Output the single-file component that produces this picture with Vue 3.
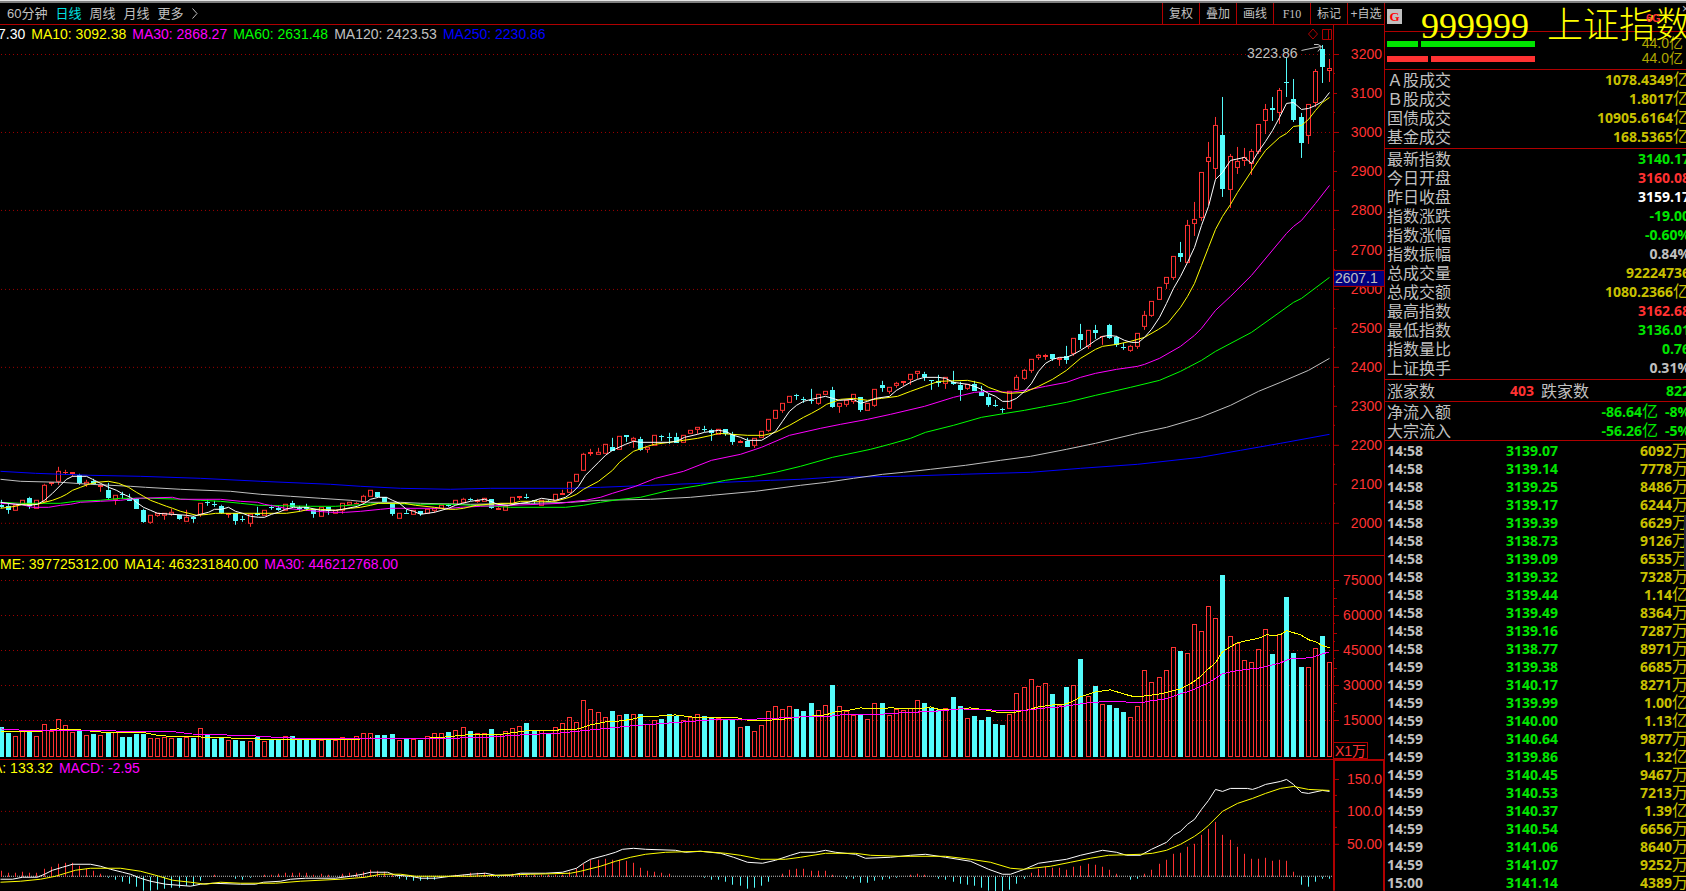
<script setup>
const periods = ['60分钟', '日线', '周线', '月线', '更多']
const tools = ['复权', '叠加', '画线', 'F10', '标记', '+自选']

const barX = (i) => 1 + Math.floor(7.1015 * i + 0.48)

// Each candle: colour, body top, body bottom, optional wick top and wick bottom.
const candleText = `
c505,507,500,508 c506,510,504,514 r505,511 r500,505 c498,506,497,509 r500,509 r485,502,484,503 r482,484,482,486 r471,482,467,485 r472,472,470,475
r472,474,472,477 c475,483,474,485 r482,485,480,487 c481,484,479,485 r485,487,484,492 c490,498,483,499 r495,500,495,505 c494,494,492,499 c498,501,494,501 c499,509
c510,522,509,523 r515,523,515,524 r513,516,513,517 r513,516,513,520 r512,515,509,516 c515,519,515,520 r517,522,510,522 c517,519,516,523 r503,515,503,517 c502,502,500,506
c504,504,501,507 c506,513,505,514 r513,515,513,518 c513,521,513,525 c519,519,516,522 r514,524,514,527 c513,515,507,516 r510,516 c507,507,505,510 c508,510,506,511
r504,511 c503,507,501,508 c508,508,506,511 c507,509,504,511 c509,514,509,518 r507,517 c507,511,507,515 r510,514 r503,511,503,514 r502,505
r503,503,502,504 r496,503,495,504 r490,497 c492,497 c497,502 c504,514,504,516 r513,519 c513,513,510,514 r510,515 c511,514,511,516
r509,514 r508,511,508,513 r505,509 c505,505,504,507 r500,505 r499,503,498,503 c499,499,498,501 r500,502,499,503 r498,502 c499,508,499,509
r508,510,506,510 r506,511 r497,505 r496,498,496,500 c497,497,494,499 c500,501,500,504 r500,506 c501,501,500,502 r494,501 r493,495,490,495
r482,493 r474,482 r454,471,453,471 r452,454,449,456 r452,455,448,455 r444,454 c447,451,438,451 r436,450 c435,437,435,442 r438,441,437,448
c439,450,437,451 r447,450,447,453 r435,446 c436,436,435,441 c437,437,433,444 c437,443,433,443 r435,443 r430,434 r427,430,427,434 c429,429,426,432
c430,433,429,441 r429,435 c429,434,429,436 c434,442,432,445 r441,443,440,443 c441,447,438,447 r438,446,438,448 r431,438 r419,431,419,432 r410,419
r403,411,403,413 r396,403 c395,395,394,400 c399,399,397,403 c400,400,389,404 r394,404,394,405 r391,395 c390,407,387,408 r403,407,403,413 r400,405,400,407
r394,402,394,404 c397,410,397,412 r403,411 r389,406,389,407 c385,388,381,392 r387,392,387,394 r383,386,382,388 r381,383,381,386 r374,380,374,385 r371,374,371,379
c374,377,372,381 c380,380,380,390 c381,383,375,387 r377,384,377,389 c382,384,371,385 c385,390,382,401 r384,389,384,390 c384,391,381,391 c392,396,386,396 c397,405,394,407
c405,405,400,407 c409,409,408,413 r391,409 r377,390,375,390 r370,379,369,380 r359,371,359,373 r355,358,354,360 r355,357,354,360 c354,359,354,361 r358,360,358,366
c356,360,346,364 r338,354,338,356 c334,340,324,349 r330,347,330,349 c330,333,325,339 r336,336,336,345 c325,338,324,339 c337,345,336,347 c347,347,343,350 r346,351,345,352
r333,347,333,349 r315,327,311,330 r301,316,301,317 r287,300 r277,284,277,289 r256,278,256,280 c253,257,242,262 r225,263,220,263 r219,224,202,236 r172,218,172,221
r157,162,142,205 r125,169,117,179 c135,189,97,197 r156,190,154,208 r161,168,147,174 r157,161,148,166 r151,164,149,175 r124,152,124,154 r109,121,104,134 c108,110,97,121
r90,113,88,124 c82,82,57,97 c99,120,79,122 c117,143,113,158 r104,136,104,144 r71,103,69,107 c49,67,45,83 r68,71,59,82`

const volumeTops = [
  727, 733, 736, 731, 731, 736, 724, 731, 719, 725, 732, 731, 735, 734, 735, 733, 732, 737, 737, 734,
  734, 738, 738, 737, 738, 738, 737, 738, 728, 734, 739, 738, 740, 740, 741, 741, 737, 741, 739, 740,
  736, 736, 738, 740, 738, 740, 740, 740, 737, 739, 736, 733, 733, 735, 735, 734, 740, 739, 739, 740,
  736, 733, 733, 732, 730, 727, 731, 733, 733, 729, 734, 731, 728, 726, 723, 730, 730, 733, 727, 723,
  717, 722, 700, 709, 712, 717, 711, 715, 714, 714, 714, 724, 720, 719, 714, 716, 720, 717, 714, 716,
  717, 718, 719, 719, 727, 726, 731, 725, 711, 706, 709, 706, 709, 711, 703, 710, 705, 685, 706, 711,
  715, 714, 719, 703, 703, 715, 709, 710, 708, 700, 703, 708, 710, 708, 697, 706, 718, 716, 720, 717,
  724, 725, 714, 693, 687, 679, 686, 683, 694, 705, 687, 685, 659, 696, 686, 704, 705, 708, 712, 717,
  706, 670, 682, 677, 670, 647, 651, 653, 624, 631, 606, 618, 575, 636, 643, 660, 662, 649, 629, 654,
  634, 597, 653, 667, 667, 648, 636, 662,
]

const macdEnds = [
  871, 873, 873, 872, 873, 873, 869, 867, 864, 863, 863, 866, 869, 871, 874, 877, 879, 881, 883, 886,
  890, 890, 889, 888, 887, 887, 885, 885, 880, 876, 875, 876, 876, 878, 879, 877, 876, 875, 875, 874,
  873, 873, 873, 873, 875, 874, 875, 876, 874, 873, 873, 872, 870, 871, 872, 875, 878, 879, 880, 880,
  879, 879, 877, 876, 875, 875, 873, 873, 873, 875, 877, 875, 874, 874, 875, 875, 875, 875, 875, 875,
  872, 869, 864, 860, 860, 859, 860, 860, 861, 863, 868, 871, 872, 873, 874, 876, 876, 876, 876, 877,
  879, 879, 881, 884, 885, 888, 887, 885, 881, 876, 874, 870, 869, 869, 871, 871, 871, 875, 876, 878,
  878, 882, 882, 880, 879, 878, 877, 876, 875, 874, 875, 876, 878, 879, 881, 883, 884, 885, 887, 890,
  891, 891, 889, 883, 878, 873, 869, 867, 868, 868, 870, 867, 866, 864, 865, 867, 870, 874, 876, 879,
  878, 874, 870, 864, 860, 854, 853, 847, 844, 835, 829, 822, 835, 840, 847, 854, 859, 859, 858, 861,
  860, 861, 872, 884, 886, 881, 878, 878,
]

const candles = candleText.trim().split(/\s+/).map((t, i) => {
  const [top, bottom, hi = top, lo = bottom] = t.slice(1).split(',').map(Number)
  return { x: barX(i), up: t[0] === 'r', top, bottom: Math.max(bottom, top + 1), hi, lo }
})

const hollow = (c) => c.up && c.bottom - c.top > 2
const wickPath = (c) => `M${c.x + 0.5} ${c.hi}V${c.top}M${c.x + 0.5} ${c.bottom}V${Math.max(c.lo, c.bottom)}`

const priceLines = [
  { cls: 'blue', pts: '0,471 35,473 90,475 140,476 200,478 260,481 330,484 360,486 400,488 450,489 490,488 570,488 600,487 650,485 700,483 770,480 800,479 830,477 900,476 960,474 1030,472 1080,468 1137,464 1200,457 1240,450 1280,443 1329,434' },
  { cls: 'gray', pts: '0,479 20,481 60,482 90,484 130,486 145,487 180,489 230,491 260,494 290,496 320,498 350,500 370,502 400,502 420,503 470,504 530,503 570,502 600,500 650,499 690,497 711,495 755,491 800,485 826,482 853,478 882,474 903,472 930,469 965,465 1000,460 1030,456 1066,449 1095,443 1137,433 1166,427 1200,417 1230,405 1258,391 1280,382 1308,370 1329,358' },
  { cls: 'green', pts: '0,502 20,503 60,503 75,501 100,500 120,498 150,498 185,499 200,500 220,501 240,503 258,505 310,506 335,506 350,505 380,503 420,504 452,504 470,505 495,506 510,507 565,507 583,505 600,502 620,499 640,497 669,490 700,485 725,480 754,476 775,472 800,466 832,457 870,449 889,444 910,438 925,432 953,425 981,417 1005,413 1024,410 1045,406 1066,402 1095,395 1130,387 1159,380 1180,371 1201,360 1215,351 1251,332 1293,302 1301,298 1329,277' },
  { cls: 'magenta', pts: '0,503 20,504 32,507 48,507 60,505 70,504 80,502 100,501 120,500 135,498 172,497 180,499 220,499 240,501 257,502 264,504 275,506 285,508 305,510 330,512 345,512 360,511 380,509 390,508 450,508 460,507 480,506 510,505 538,504 560,503 575,501 585,500 600,497 612,493 635,486 655,478 683,471 711,460 740,454 761,447 789,435 820,428 840,424 867,419 890,414 924,406 953,397 974,392 988,391 1010,392 1030,389 1045,386 1066,382 1080,377 1095,373 1116,369 1137,366 1144,364 1159,358 1180,346 1194,335 1201,328 1215,310 1230,296 1251,275 1286,233 1293,226 1301,220 1315,203 1329,185' },
  { cls: 'yellow', pts: '0,508 15,506 22,504 37,504 44,502 52,500 60,497 66,494 72,490 80,487 88,484 96,482 108,481 118,483 128,487 136,492 143,496 150,500 158,503 166,506 172,508 180,511 188,513 196,515 208,514 215,513 286,513 300,511 308,509 320,509 335,510 350,508 360,507 370,505 378,503 404,503 415,505 434,507 448,509 455,509 463,508 476,505 500,503 512,503 520,501 555,501 569,497 576,494 583,489 598,481 612,470 619,462 633,451 647,446 654,444 669,442 683,440 697,438 711,435 718,433 732,434 747,435 763,435 775,432 789,425 803,417 811,413 820,408 826,404 840,399 853,398 867,400 881,398 897,396 910,391 924,386 938,381 967,380 981,383 988,387 1002,392 1009,393 1024,392 1038,386 1052,379 1066,370 1080,358 1095,349 1102,346 1116,344 1130,341 1144,337 1158,329 1167,323 1180,307 1187,296 1194,283 1201,265 1208,247 1215,229 1222,216 1230,204 1237,192 1258,160 1265,150 1279,137 1286,133 1293,126 1301,125 1308,119 1315,110 1322,102 1329,97' },
  { cls: 'white', pts: '0,502 15,504 29,505 37,504 44,500 52,493 60,485 66,479 72,476 86,476 92,479 100,483 108,487 116,490 123,494 130,497 136,502 143,507 150,510 157,513 172,514 186,515 193,516 200,514 208,512 214,509 221,509 228,507 235,511 242,513 250,516 258,517 264,517 271,514 278,512 285,509 293,507 306,507 320,510 335,510 342,509 357,506 364,503 370,499 378,497 386,497 392,500 399,503 406,509 413,511 420,514 434,512 448,508 455,505 462,503 470,501 484,499 490,501 497,504 508,505 520,503 528,502 541,498 555,500 565,497 572,492 578,486 585,475 591,469 598,462 605,455 612,450 625,444 633,441 640,442 668,442 676,441 684,437 697,434 704,432 718,430 725,431 733,435 740,437 747,440 761,440 768,436 775,431 782,421 789,411 796,405 803,401 811,399 825,396 832,398 839,400 853,399 860,403 867,401 875,398 889,396 896,390 903,386 910,382 917,379 924,377 938,377 945,378 953,382 960,383 967,384 974,386 981,389 988,393 995,396 1002,401 1009,401 1016,398 1024,391 1031,383 1038,371 1045,363 1052,359 1059,357 1066,357 1073,354 1080,350 1088,345 1095,340 1102,336 1109,335 1116,336 1124,340 1131,342 1138,342 1144,337 1151,329 1159,317 1166,303 1173,288 1180,276 1187,262 1194,247 1201,225 1208,206 1215,179 1222,172 1230,160 1244,157 1251,163 1258,151 1265,141 1272,130 1279,117 1286,103 1293,102 1301,109 1308,108 1315,105 1322,101 1329,92' },
]

const volumeLines = [
  { cls: 'yellow', pts: '0,731 35,731 57,728 80,729 98,731 145,732 155,734 175,736 200,736 230,737 255,738 300,739 350,739 370,737 400,738 430,737 445,736 465,734 495,734 510,732 525,730 560,729 578,728 590,724 605,721 620,720 633,718 640,716 660,715 675,714 690,716 705,717 737,717 745,719 760,720 785,718 800,716 825,714 835,711 850,709 860,707 870,708 890,707 920,708 930,706 940,709 960,708 970,707 985,709 1000,712 1010,712 1027,709 1038,706 1052,704 1066,703 1073,700 1080,696 1095,691 1110,689 1123,693 1130,695 1137,696 1160,693 1180,688 1190,683 1201,675 1208,668 1215,662 1222,651 1230,646 1237,642 1260,637 1266,634 1273,635 1280,634 1286,630 1300,634 1308,639 1315,641 1322,645 1329,647' },
  { cls: 'magenta', pts: '0,728 35,730 115,730 135,731 175,731 200,734 225,734 255,735 270,736 290,737 325,738 400,738 440,738 460,737 490,736 520,734 560,732 590,729 630,725 670,722 710,719 760,718 800,716 825,716 840,714 870,714 900,712 940,710 960,708 990,709 1000,710 1020,710 1045,707 1060,706 1073,704 1087,702 1100,701 1125,701 1132,702 1140,702 1150,700 1165,698 1180,693 1190,690 1208,682 1222,673 1235,670 1260,667 1280,662 1290,658 1310,657 1329,651' },
]

const macdLines = [
  { cls: 'white', pts: '0,879 12,879 22,877 37,877 44,874 52,870 62,867 72,864 90,864 100,866 110,869 122,872 130,874 140,878 150,881 165,884 190,886 200,884 212,883 240,884 255,884 263,882 280,881 290,879 305,878 335,878 350,876 362,874 370,872 387,872 395,875 410,876 420,878 435,878 450,876 470,874 485,873 495,875 510,875 520,873 545,873 562,872 576,868 583,863 590,859 605,855 615,852 622,849 633,848 645,849 675,850 685,852 700,851 720,853 733,857 747,862 762,863 775,860 790,855 800,852 815,852 825,850 835,852 855,854 865,858 890,857 910,855 925,854 945,857 970,861 988,869 1002,874 1010,874 1024,869 1038,863 1052,861 1066,859 1080,855 1102,850 1116,852 1126,855 1140,855 1151,849 1166,842 1173,835 1180,831 1187,824 1194,819 1201,809 1208,800 1215,789 1222,791 1230,788 1247,788 1252,789 1258,787 1265,784 1280,781 1286,779 1293,784 1301,792 1308,793 1322,790 1329,791' },
  { cls: 'yellow', pts: '0,882 20,881 40,879 55,876 65,873 75,870 90,868 120,868 140,871 155,875 172,880 190,882 205,884 220,882 240,883 275,883 300,881 340,879 365,877 380,874 400,874 415,876 470,876 500,875 530,874 570,873 580,871 600,866 615,861 630,857 645,854 665,852 700,851 725,853 740,855 760,859 785,859 800,857 825,853 855,853 870,855 900,856 945,856 970,859 990,862 1010,868 1023,869 1050,866 1070,862 1090,858 1108,855 1140,854 1152,853 1166,850 1180,844 1194,836 1201,831 1208,825 1222,811 1237,803 1252,798 1265,793 1280,788 1293,786 1308,789 1329,790' },
]

const priceTicks = Array.from({ length: 13 }, (_, k) => ({
  label: String(3200 - k * 100),
  y: Math.round(54 + k * 39.1),
  major: k % 2 === 0,
}))
const volumeTicks = [75000, 60000, 45000, 30000, 15000].map((v, k) => ({ label: String(v), y: 580 + k * 35 }))
const macdTicks = [
  { label: '150.0', y: 779 },
  { label: '100.0', y: 811 },
  { label: '50.00', y: 844 },
]

const turnover = [
  ['Ａ股成交', '1078.4349', '亿', 'olive'],
  ['Ｂ股成交', '1.8017', '亿', 'olive'],
  ['国债成交', '10905.6164', '亿', 'olive'],
  ['基金成交', '168.5365', '亿', 'olive'],
]
const quotes = [
  ['最新指数', '3140.17', '', 'down'],
  ['今日开盘', '3160.08', '', 'up'],
  ['昨日收盘', '3159.17', '', 'flat'],
  ['指数涨跌', '-19.00', '', 'down'],
  ['指数涨幅', '-0.60%', '', 'down'],
  ['指数振幅', '0.84%', '', 'dim'],
  ['总成交量', '92224736', '', 'olive'],
  ['总成交额', '1080.2366', '亿', 'olive'],
  ['最高指数', '3162.68', '', 'up'],
  ['最低指数', '3136.01', '', 'down'],
  ['指数量比', '0.76', '', 'down'],
  ['上证换手', '0.31%', '', 'dim'],
]
const flows = [
  ['净流入额', '-86.64', '-8%'],
  ['大宗流入', '-56.26', '-5%'],
]
const trades = `14:58 3139.07 6092万
14:58 3139.14 7778万
14:58 3139.25 8486万
14:58 3139.17 6244万
14:58 3139.39 6629万
14:58 3138.73 9126万
14:58 3139.09 6535万
14:58 3139.32 7328万
14:58 3139.44 1.14亿
14:58 3139.49 8364万
14:58 3139.16 7287万
14:58 3138.77 8971万
14:59 3139.38 6685万
14:59 3140.17 8271万
14:59 3139.99 1.00亿
14:59 3140.00 1.13亿
14:59 3140.64 9877万
14:59 3139.86 1.32亿
14:59 3140.45 9467万
14:59 3140.53 7213万
14:59 3140.37 1.39亿
14:59 3140.54 6656万
14:59 3141.06 8640万
14:59 3141.07 9252万
15:00 3141.14 4389万`.split('\n').map((l) => {
  const [time, price, vol] = l.split(' ')
  return { time, price, amount: vol.slice(0, -1), unit: vol.slice(-1) }
})
</script>

<template>
  <div class="app">
    <div class="frame-edge"></div>
    <div class="body">
      <main class="left">
        <nav class="toolbar">
          <div class="periods">
            <button v-for="p in periods" :key="p" type="button" :class="{ active: p === '日线' }">{{ p }}</button>
            <button type="button" class="more" aria-label="展开">
              <svg width="6" height="11" viewBox="0 0 6 11"><path d="M.5.5L5 5.5L.5 10.5" fill="none" stroke="#c0c0c0" /></svg>
            </button>
          </div>
          <div class="tools">
            <button v-for="t in tools" :key="t" type="button" :class="{ latin: t === 'F10' }">{{ t }}</button>
          </div>
        </nav>

        <section class="pane price">
          <svg class="plot" viewBox="0 25 1333 530" preserveAspectRatio="none">
            <template v-for="t in priceTicks" :key="t.y">
              <line v-if="t.major" class="grid" x1="1" x2="1332" :y1="t.y + 0.5" :y2="t.y + 0.5" />
            </template>
            <g v-for="c in candles" :key="c.x" :class="c.up ? 'rise' : 'fall'">
              <path class="wick" :d="wickPath(c)" />
              <rect v-if="hollow(c)" class="hollow" :x="c.x - 1.5" :y="c.top + 0.5" width="4" :height="c.bottom - c.top - 1" />
              <rect v-else class="solid" :x="c.x - 2" :y="c.top" width="5" :height="c.bottom - c.top" />
            </g>
            <polyline v-for="l in priceLines" :key="l.cls" class="ma" :class="l.cls" :points="l.pts" transform="translate(.5 .5)" />
            <text class="peak" x="1247" y="58">3223.86</text>
            <path class="arrow" d="M1301.5 50.5L1306 49.5L1321 46.5M1314 44.5H1318L1321.500 46.500L1318 51.500" />
          </svg>
          <header class="legend first">
            <span class="white">7.30</span><span class="yellow">MA10: 3092.38</span><span class="magenta">MA30: 2868.27</span>
            <span class="green">MA60: 2631.48</span><span class="gray">MA120: 2423.53</span><span class="blue">MA250: 2230.86</span>
            <div class="pane-tools">
              <button type="button" aria-label="标记">
                <svg width="10" height="12" viewBox="0 0 10 12"><path d="M5 1L9.500 6L5 11L.5 6Z" fill="none" stroke="#b00000" /></svg>
              </button>
              <button type="button" aria-label="窗口">
                <svg width="10" height="11" viewBox="0 0 10 11"><path d="M.5.5H9.500V10.500H.5ZM6.500.5V10.500" fill="none" stroke="#b00000" /></svg>
              </button>
            </div>
          </header>
          <svg class="axis" viewBox="1333 25 51 530" preserveAspectRatio="none">
            <path class="rule" d="M1333.5 25V555" />
            <g v-for="(t, k) in priceTicks" :key="t.y">
              <path class="rule" :d="`M1334 ${t.y + 0.5}H${t.major ? 1339 : 1337}`" />
              <path v-if="k < 12" class="rule" :d="`M1334 ${t.y + 19.5}H1335`" />
              <text class="scale" x="1382" :y="t.y + 5">{{ t.label }}</text>
            </g>
            <rect class="cursor" x="1333.500" y="270.500" width="52" height="16" />
            <text class="cursor-text" x="1335" y="283">2607.1</text>
          </svg>
        </section>

        <section class="pane volume">
          <svg class="plot" viewBox="0 556 1333 203" preserveAspectRatio="none">
            <line v-for="t in volumeTicks" :key="t.y" class="grid" x1="1" x2="1332" :y1="t.y + 0.5" :y2="t.y + 0.5" />
            <g v-for="(c, i) in candles" :key="c.x" :class="c.up ? 'rise' : 'fall'">
              <rect v-if="c.up" class="hollow" :x="c.x - 1.5" :y="volumeTops[i] + 0.5" width="4" :height="755 - volumeTops[i]" />
              <rect v-else class="solid" :x="c.x - 2" :y="volumeTops[i]" width="5" :height="756 - volumeTops[i]" />
            </g>
            <polyline v-for="l in volumeLines" :key="l.cls" class="ma" :class="l.cls" :points="l.pts" transform="translate(.5 .5)" />
          </svg>
          <header class="legend lower">
            <span class="yellow">ME: 397725312.00</span><span class="yellow">MA14: 463231840.00</span><span class="magenta">MA30: 446212768.00</span>
          </header>
          <svg class="axis" viewBox="1333 556 51 203" preserveAspectRatio="none">
            <path class="rule" d="M1333.5 556V759" />
            <g v-for="(t, k) in volumeTicks" :key="t.y">
              <path class="rule" :d="`M1334 ${t.y + 0.5}H1339`" />
              <path v-if="k < 4" class="rule" :d="`M1334 ${t.y + 8.5}h1M1334 ${t.y + 18.5}h3M1334 ${t.y + 26.5}h1`" />
              <text class="scale" x="1382" :y="t.y + 5">{{ t.label }}</text>
            </g>
            <rect class="unit-box" x="1333.500" y="742.500" width="34" height="15" />
            <text class="unit-text" x="1335" y="755">X1万</text>
          </svg>
        </section>

        <section class="pane macd">
          <svg class="plot" viewBox="0 760 1333 131" preserveAspectRatio="none">
            <line class="grid" x1="1" x2="1332" y1="811.500" y2="811.500" />
            <line class="grid" x1="1" x2="1332" y1="844.500" y2="844.500" />
            <line class="zero" x1="1" x2="1332" y1="876.500" y2="876.500" />
            <g v-for="(c, i) in candles" :key="c.x" :class="macdEnds[i] < 876 ? 'rise' : 'fall'">
              <path v-if="macdEnds[i] !== 876" class="wick" :d="`M${c.x + 0.5} 877V${macdEnds[i] > 876 ? macdEnds[i] + 1 : macdEnds[i]}`" />
            </g>
            <polyline v-for="l in macdLines" :key="l.cls" class="ma" :class="l.cls" :points="l.pts" transform="translate(.5 .5)" />
          </svg>
          <header class="legend lower last">
            <span class="yellow">A: 133.32</span><span class="magenta">MACD: -2.95</span>
          </header>
          <svg class="axis" viewBox="1333 760 51 131" preserveAspectRatio="none">
            <path class="rule" d="M1333 760.5H1384M1333.5 760V891M1334.5 760V891M1383.5 760V891" />
            <g v-for="(t, k) in macdTicks" :key="t.y">
              <path class="rule" :d="`M1334 ${t.y + 0.5}H1339`" />
              <path v-if="k < 2" class="rule" :d="`M1334 ${t.y + 16.5}h3`" />
              <text class="scale" x="1382" :y="t.y + 5">{{ t.label }}</text>
            </g>
          </svg>
        </section>
      </main>

      <aside class="side">
        <header class="head">
          <div class="title">
            <span class="badge">G</span>
            <h1><span>999999</span><span>上证指数</span></h1>
            <span class="mark">6G</span>
            <span class="close">×</span>
          </div>
          <div class="meters">
            <div class="meter buy"><i class="a"></i><i class="b"></i><span>44.0亿</span></div>
            <div class="meter sell"><i class="a"></i><i class="b"></i><span>44.0亿</span></div>
          </div>
        </header>

        <section class="block">
          <table>
            <tr v-for="r in turnover" :key="r[0]">
              <th scope="row">{{ r[0] }}</th>
              <td :class="r[3]">{{ r[1] }}<span class="u">{{ r[2] }}</span></td>
            </tr>
          </table>
        </section>
        <section class="block">
          <table>
            <tr v-for="r in quotes" :key="r[0]">
              <th scope="row">{{ r[0] }}</th>
              <td :class="r[3]">{{ r[1] }}<span v-if="r[2]" class="u">{{ r[2] }}</span></td>
            </tr>
          </table>
        </section>
        <section class="block tight breadth">
          <table>
            <tr>
              <th scope="row">涨家数</th><td class="up">403</td>
              <th scope="row" class="second">跌家数</th><td class="down">822</td>
            </tr>
          </table>
        </section>
        <section class="block tight">
          <table class="flows">
            <tr v-for="f in flows" :key="f[0]">
              <th scope="row">{{ f[0] }}</th>
              <td class="down">{{ f[1] }}<span class="u">亿</span></td>
              <td class="down pct">{{ f[2] }}</td>
            </tr>
          </table>
        </section>
        <section class="block trades">
          <table>
            <tr v-for="(t, i) in trades" :key="i">
              <td class="time dim">{{ t.time }}</td>
              <td class="cost down">{{ t.price }}</td>
              <td class="olive">{{ t.amount }}<span class="u">{{ t.unit }}</span></td>
            </tr>
          </table>
        </section>
        <div class="drawer"></div>
      </aside>
    </div>
  </div>
</template>

<style>
html,
body {
  background: #000;
  overflow: hidden;
}
</style>

<style scoped>
.app {
  display: flex;
  flex-direction: column;
  height: 100vh;
  overflow: hidden;
  background: #000;
  color: #c0c0c0;
  font-family: "Liberation Sans", "Noto Sans CJK SC", sans-serif;
  font-size: 14px;
}
.app * {
  box-sizing: border-box;
}
.frame-edge {
  flex: none;
  height: 3px;
  background: #808080;
  border-top: 1px solid #e4e4e4;
}
.body {
  flex: 1;
  min-height: 0;
  display: flex;
}
.left {
  flex: 1;
  min-width: 0;
  display: flex;
  flex-direction: column;
}
button {
  padding: 0;
  border: 0;
  background: none;
  color: inherit;
  font: inherit;
}
svg {
  display: block;
}

.toolbar {
  flex: none;
  height: 22px;
  display: flex;
  justify-content: space-between;
  border-bottom: 1px solid #b00000;
  font-size: 13px;
  line-height: 20px;
}
.periods {
  display: flex;
  align-items: center;
  gap: 8px;
  padding-left: 7px;
}
.periods .active {
  color: #00e0e0;
}
.tools {
  display: flex;
}
.tools button {
  width: 37px;
  border-left: 1px solid #b00000;
  font-size: 12px;
  white-space: nowrap;
}
.tools .latin {
  font-family: "Liberation Serif", serif;
}

.pane {
  min-height: 0;
  display: grid;
  grid-template-columns: minmax(0, 1fr) 51px;
  grid-template-rows: minmax(0, 1fr);
}
.price {
  flex: 531 1 0;
  border-bottom: 1px solid #b00000;
}
.volume {
  flex: 204 1 0;
  border-bottom: 1px solid #b00000;
}
.macd {
  flex: 131 1 0;
}
.plot,
.axis {
  width: 100%;
  height: 100%;
  shape-rendering: crispEdges;
}
.plot,
.legend {
  grid-area: 1 / 1;
}
.axis {
  grid-area: 1 / 2;
}
.legend {
  align-self: start;
  display: flex;
  gap: 6px;
  height: 18px;
  line-height: 18px;
  white-space: nowrap;
  overflow: hidden;
}
.legend.lower {
  height: 16px;
  line-height: 16px;
}
.legend.first span:first-child {
  margin-left: -2px;
}
.legend.last span:first-child {
  margin-left: -7px;
}
.pane-tools {
  display: flex;
  align-items: center;
  gap: 4px;
  margin-left: auto;
  padding-right: 1px;
}

.grid {
  stroke: #a00000;
  stroke-dasharray: 1 3;
}
.zero {
  stroke: #c0c0c0;
  stroke-dasharray: 1 1;
}
.rule {
  stroke: #b00000;
  fill: none;
}
.rise {
  stroke: #ff3232;
  fill: #ff3232;
}
.fall {
  stroke: #54fcfc;
  fill: #54fcfc;
}
.hollow {
  fill: none;
}
.solid {
  stroke: none;
}
.ma {
  fill: none;
}
.white {
  color: #fff;
  stroke: #fff;
}
.yellow {
  color: #ff0;
  stroke: #ff0;
}
.magenta {
  color: #f0f;
  stroke: #f0f;
}
.green {
  color: #0f0;
  stroke: #0f0;
}
.gray {
  color: #c0c0c0;
  stroke: #c0c0c0;
}
.blue {
  color: #00f;
  stroke: #00f;
}
text {
  font-size: 14px;
}
.scale {
  fill: #ff3232;
  text-anchor: end;
}
.peak {
  fill: #c0c0c0;
}
.arrow {
  fill: none;
  stroke: #c0c0c0;
}
.cursor {
  fill: #000080;
  stroke: #b00000;
}
.cursor-text {
  fill: #c0c0c0;
}
.unit-box {
  fill: #000;
  stroke: #b00000;
}
.unit-text {
  fill: #ff3232;
}

.side {
  position: relative;
  flex: none;
  width: 302px;
  overflow: hidden;
  border-left: 1px solid #b00000;
}
.head {
  height: 67px;
  border-bottom: 1px solid #b00000;
}
.title {
  position: relative;
  display: flex;
  height: 29px;
  padding: 6px 0 0 2px;
  border-bottom: 1px solid #b00000;
}
.badge {
  flex: none;
  width: 15px;
  height: 15px;
  background: #c0c0c0;
  color: #f00;
  font: bold 13px/15px "Liberation Serif", serif;
  text-align: center;
}
h1 {
  flex: none;
  display: flex;
  gap: 18px;
  margin: -5px 0 0 19px;
  height: 44px;
  color: #ff0;
  font: 300 36px/44px "Liberation Serif", "Noto Sans CJK SC", serif;
  white-space: nowrap;
}
.mark {
  position: absolute;
  left: 261px;
  top: 8px;
  color: #ff3232;
  font: bold 11px/14px "Liberation Sans", sans-serif;
}
.close {
  position: absolute;
  right: -3px;
  top: 0;
  font-size: 12px;
  line-height: 12px;
}
.meters {
  padding: 4px 3px 0 2px;
}
.meter {
  display: flex;
  align-items: center;
  gap: 3px;
  height: 15px;
  color: #b0a800;
}
.meter i {
  height: 6px;
}
.meter span {
  margin-left: auto;
  line-height: 15px;
}
.buy i {
  background: #00e600;
}
.sell i {
  background: #ff3232;
}
.buy .a {
  width: 31px;
}
.buy .b {
  width: 114px;
}
.sell .a {
  width: 41px;
}
.sell .b {
  width: 104px;
}

.block {
  width: calc(100% + 4px);
  padding: 0 0 2px 2px;
  border-bottom: 1px solid #b00000;
}
.tight {
  padding: 0 0 0 2px;
}
.trades {
  padding: 1px 1px 0 2px;
  border-bottom: 0;
}
table {
  width: 100%;
  border-collapse: collapse;
}
th,
td {
  height: 19px;
  padding: 0;
  line-height: 19px;
  white-space: nowrap;
}
th {
  color: #c0c0c0;
  font-family: "Noto Sans CJK SC", sans-serif;
  font-size: 16px;
  font-weight: 400;
  text-align: left;
}
td {
  font-family: "Open Sans", "Noto Sans CJK SC", sans-serif;
  font-size: 14px;
  font-weight: 700;
  text-align: right;
}
.u {
  font-family: "Noto Sans CJK SC", sans-serif;
  font-size: 16px;
  font-weight: 400;
  line-height: 1px;
  margin-right: 1px;
}
.breadth th,
.breadth td {
  height: 21px;
  line-height: 21px;
}
.breadth .second {
  width: 55px;
  padding-left: 7px;
}
.breadth td:last-child {
  width: 101px;
}
.flows .pct {
  width: 31px;
}
.trades td {
  height: 18px;
  line-height: 18px;
}
.trades .time {
  width: 60px;
  text-align: left;
}
.trades .cost {
  width: 111px;
}
.olive {
  color: #c8c000;
}
.down {
  color: #00e600;
}
.up {
  color: #ff3232;
}
.flat {
  color: #fff;
}
.dim {
  color: #c0c0c0;
}
.drawer {
  position: absolute;
  right: 0;
  top: 512px;
  width: 2px;
  height: 55px;
  background: #28283a;
}
</style>
